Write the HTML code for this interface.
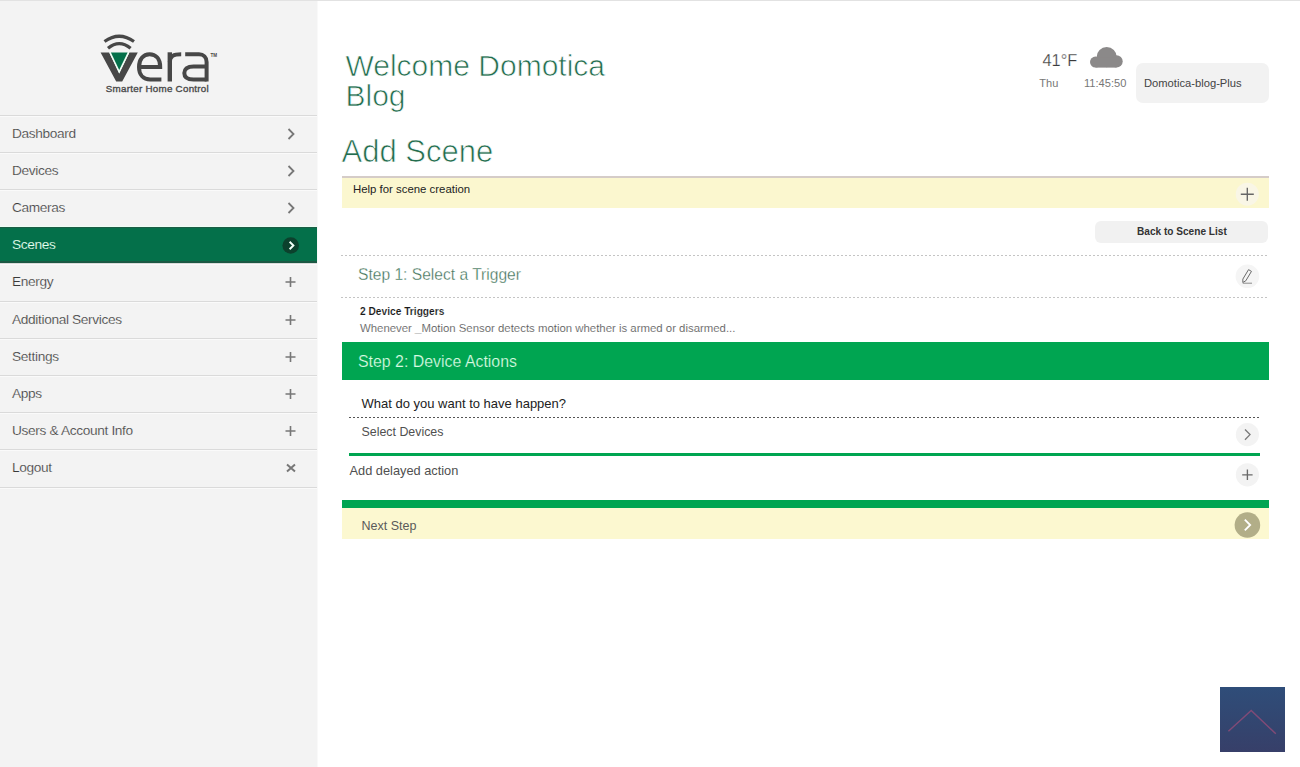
<!DOCTYPE html>
<html><head><meta charset="utf-8">
<style>
*{margin:0;padding:0;box-sizing:border-box}
html,body{width:1300px;height:767px;overflow:hidden;background:#fff;font-family:"Liberation Sans",sans-serif}
.abs{position:absolute}
.t{position:absolute;white-space:nowrap;line-height:1}
#topline{position:absolute;left:0;top:0;width:1300px;height:1px;background:#e2e2e2}
#side{position:absolute;left:0;top:1px;width:317px;height:766px;background:#f3f3f3;box-shadow:1px 0 0 #f9f9f9}
.mi{position:absolute;left:0;width:317px;height:37.2px;border-top:1px solid #dadada}
.mi:after{content:"";position:absolute;left:0;top:0;width:317px;height:1px;background:#fafafa}
.mi span{position:absolute;left:12px;top:11.2px;font-size:13.7px;line-height:14px;letter-spacing:-0.35px;color:#3a3a3a;white-space:nowrap;-webkit-text-stroke:0.2px #f3f3f3}
.mi svg{position:absolute;left:280px;top:8px}
.mi.act{background:#04704a;border-top:1px solid #ecfff5;box-shadow:inset 0 1px 0 #1d5c45,inset 0 -2px 0 #1b5843,0 1px 0 #ecfff5}
.mi.act:after{display:none}
.mi.act span{color:#e6fff0;-webkit-text-stroke:0.12px #04704a}
</style></head><body>
<div id="topline"></div>
<div id="side"></div>
<!-- logo -->
<svg class="abs" style="left:0;top:0" width="317" height="110" viewBox="0 0 317 110">
  <g fill="none" stroke="#474747" stroke-linecap="butt">
    <path d="M104.5,41.5 Q119.2,31 134,41.5" stroke-width="3.2"/>
    <path d="M108,48.3 Q119.2,39 130.6,48.3" stroke-width="3.2"/>
  </g>
  <polygon points="100.6,52.5 109.2,52.5 119.2,73.5 129.4,52.5 137.8,52.5 122.2,81.5 116.2,81.5" fill="#474747"/>
  <polygon points="109.2,52.5 129.4,52.5 119.2,73.5" fill="#f0fff6"/>
  <polygon points="110.9,52.5 127.6,52.5 119.2,70" fill="#04704a"/>
  <g fill="none" stroke="#474747" stroke-width="4">
    <path d="M139.5,67 L160.2,67 C160.2,58.5 155.5,54.3 149.6,54.3 C143.2,54.3 139,59.5 139,67 C139,75 143.5,79.5 150.2,79.5 L161.4,79.5"/>
    <path d="M169.8,52.3 V81.5" stroke-width="4.4"/>
    <path d="M169.8,62 C170,56 173.5,54.3 181.2,54.3"/>
    <path d="M185.2,54.3 H199 C203.5,54.3 206.6,57.5 206.6,62 V81.5"/>
    <path d="M206.6,66.4 H193.5 C187,66.4 184.3,69.5 184.3,73 C184.3,77 187,79.5 193.5,79.5 H206.6"/>
  </g>
  <text x="210.4" y="56.5" font-family="Liberation Sans" font-weight="bold" font-size="4.6" fill="#474747">TM</text>
</svg>
<div class="t" style="left:105.8px;top:83.6px;font-size:9.8px;letter-spacing:0.26px;color:#4a4a4a;-webkit-text-stroke:0.35px #4a4a4a">Smarter Home Control</div>

<div class="mi" style="top:114.5px"><span>Dashboard</span><svg width="20" height="20" viewBox="0 0 20 20"><path d="M8.5,5 L13.5,10 L8.5,15" fill="none" stroke="#777" stroke-width="1.8"/></svg></div>
<div class="mi" style="top:151.7px"><span>Devices</span><svg width="20" height="20" viewBox="0 0 20 20"><path d="M8.5,5 L13.5,10 L8.5,15" fill="none" stroke="#777" stroke-width="1.8"/></svg></div>
<div class="mi" style="top:188.9px"><span>Cameras</span><svg width="20" height="20" viewBox="0 0 20 20"><path d="M8.5,5 L13.5,10 L8.5,15" fill="none" stroke="#777" stroke-width="1.8"/></svg></div>
<div class="mi act" style="top:226.1px"><span>Scenes</span><svg width="20" height="20" viewBox="0 0 20 20"><circle cx="10.7" cy="10.5" r="8.3" fill="#0c412d"/><path d="M9.6,6.8 L13.4,10.5 L9.6,14.2" fill="none" stroke="#f4fff8" stroke-width="1.9"/></svg></div>
<div class="mi" style="top:263.3px"><span>Energy</span><svg width="20" height="20" viewBox="0 0 20 20"><path d="M5.5,10 H15.5 M10.5,5 V15" fill="none" stroke="#777" stroke-width="1.6"/></svg></div>
<div class="mi" style="top:300.5px"><span>Additional Services</span><svg width="20" height="20" viewBox="0 0 20 20"><path d="M5.5,10 H15.5 M10.5,5 V15" fill="none" stroke="#777" stroke-width="1.6"/></svg></div>
<div class="mi" style="top:337.7px"><span>Settings</span><svg width="20" height="20" viewBox="0 0 20 20"><path d="M5.5,10 H15.5 M10.5,5 V15" fill="none" stroke="#777" stroke-width="1.6"/></svg></div>
<div class="mi" style="top:374.9px"><span>Apps</span><svg width="20" height="20" viewBox="0 0 20 20"><path d="M5.5,10 H15.5 M10.5,5 V15" fill="none" stroke="#777" stroke-width="1.6"/></svg></div>
<div class="mi" style="top:412.1px"><span>Users &amp; Account Info</span><svg width="20" height="20" viewBox="0 0 20 20"><path d="M5.5,10 H15.5 M10.5,5 V15" fill="none" stroke="#777" stroke-width="1.6"/></svg></div>
<div class="mi" style="top:449.3px"><span>Logout</span><svg width="20" height="20" viewBox="0 0 20 20"><path d="M7,6.5 L15,13.5 M15,6.5 L7,13.5" fill="none" stroke="#777" stroke-width="2"/></svg></div>
<div class="mi" style="top:486.5px;height:2px"></div>

<!-- header -->
<div class="t" style="left:345.5px;top:51.3px;font-size:30px;line-height:29.6px;color:#236d4e;-webkit-text-stroke:0.7px #fff;paint-order:normal">Welcome Domotica<br>Blog</div>
<div class="t" style="left:341.5px;top:135.5px;font-size:31px;color:#236d4e;-webkit-text-stroke:0.7px #fff">Add Scene</div>

<!-- weather -->
<div class="t" style="left:1042.5px;top:51.5px;font-size:16.4px;color:#3a3a3a;-webkit-text-stroke:0.25px #fff">41°F</div>
<svg class="abs" style="left:1088px;top:45px" width="38" height="25" viewBox="0 0 38 25">
  <g fill="#8b8989"><circle cx="7.5" cy="17.1" r="5.5"/><circle cx="18.7" cy="12.2" r="10.1"/><circle cx="28.5" cy="16.4" r="6.2"/><rect x="7.5" y="12.7" width="21" height="9.9"/></g>
</svg>
<div class="t" style="left:1039.3px;top:77.7px;font-size:11px;color:#777">Thu</div>
<div class="t" style="left:1084px;top:77.7px;font-size:11.1px;color:#777">11:45:50</div>
<div class="abs" style="left:1136px;top:63px;width:132.5px;height:39.5px;background:#f2f2f2;border-radius:7px"></div>
<div class="t" style="left:1144px;top:77.7px;font-size:11.2px;color:#444">Domotica-blog-Plus</div>

<!-- help -->
<div class="abs" style="left:342px;top:176px;width:926.5px;height:32px;background:#fbf7cf;border-top:2px solid #d5ccc8"></div>
<div class="t" style="left:353px;top:184.2px;font-size:11.4px;color:#222">Help for scene creation</div>
<svg class="abs" style="left:1234px;top:181px" width="27" height="27" viewBox="0 0 27 27">
  <circle cx="13.3" cy="13.2" r="11.5" fill="#f9f6e6"/>
  <path d="M6.8,13.2 H19.8 M13.3,6.7 V19.7" stroke="#666" stroke-width="1.35"/>
</svg>

<!-- back button -->
<div class="abs" style="left:1094.7px;top:221px;width:173.8px;height:22px;background:#f1f1f1;border-radius:6px"></div>
<div class="t" style="left:1137px;top:227.3px;font-size:10.1px;font-weight:bold;color:#333">Back to Scene List</div>

<!-- step1 -->
<div class="abs" style="left:341px;top:254.5px;width:927.5px;height:1px;background:repeating-linear-gradient(90deg,#c4c4c4 0 2px,transparent 2px 4px)"></div>
<div class="t" style="left:358px;top:266.8px;font-size:15.6px;color:#3c7055;-webkit-text-stroke:0.3px #fff">Step 1: Select a Trigger</div>
<svg class="abs" style="left:1234px;top:262px" width="27" height="27" viewBox="0 0 27 27">
  <circle cx="13.4" cy="14.3" r="11.8" fill="#f5f5f5"/>
  <path d="M8.8,20.5 L8.87,17.05 L14.54,7.63 L17.46,9.37 L11.79,18.79 Z" fill="none" stroke="#6a6a6a" stroke-width="1"/><path d="M8.8,21.2 H18" stroke="#8a8a8a" stroke-width="1"/>
</svg>
<div class="abs" style="left:341px;top:297.3px;width:927.5px;height:1px;background:repeating-linear-gradient(90deg,#c4c4c4 0 2px,transparent 2px 4px)"></div>
<div class="t" style="left:360px;top:307.2px;font-size:10.2px;font-weight:bold;color:#1a1a1a;-webkit-text-stroke:0.12px #fff">2 Device Triggers</div>
<div class="t" style="left:360px;top:322.7px;font-size:11.4px;color:#5a5a5a;-webkit-text-stroke:0.12px #fff">Whenever _Motion Sensor detects motion whether is armed or disarmed...</div>

<!-- step2 -->
<div class="abs" style="left:342px;top:342px;width:926.5px;height:38px;background:#00a551"></div>
<div class="t" style="left:358px;top:353.5px;font-size:15.9px;color:#d8fbe2;-webkit-text-stroke:0.2px #00a551">Step 2: Device Actions</div>
<div class="t" style="left:361.5px;top:396.7px;font-size:13px;color:#222">What do you want to have happen?</div>
<div class="abs" style="left:349px;top:416.5px;width:912px;height:1px;background:repeating-linear-gradient(90deg,#555 0 2px,transparent 2px 4px)"></div>
<div class="t" style="left:361.5px;top:426px;font-size:12.4px;color:#505050">Select Devices</div>
<svg class="abs" style="left:1234px;top:421px" width="27" height="27" viewBox="0 0 27 27">
  <circle cx="13.4" cy="13.6" r="11.6" fill="#f3f3f3"/>
  <path d="M11,8.5 L16,13.6 L11,18.7" fill="none" stroke="#7a7a7a" stroke-width="1.35"/>
</svg>
<div class="abs" style="left:349px;top:452.8px;width:911px;height:3.6px;background:#00a551"></div>
<div class="t" style="left:349.5px;top:465px;font-size:12.8px;color:#505050">Add delayed action</div>
<svg class="abs" style="left:1234px;top:461px" width="27" height="27" viewBox="0 0 27 27">
  <circle cx="13.4" cy="13.8" r="11.6" fill="#f3f3f3"/>
  <path d="M8.2,13.8 H18.6 M13.4,8.6 V19" stroke="#6a6a6a" stroke-width="1.35"/>
</svg>

<!-- next -->
<div class="abs" style="left:342px;top:500px;width:926.5px;height:8px;background:#00a551"></div>
<div class="abs" style="left:342px;top:508px;width:926.5px;height:31px;background:#fcf8d0"></div>
<div class="t" style="left:361.5px;top:519.8px;font-size:12.5px;color:#5a5a5a">Next Step</div>
<svg class="abs" style="left:1234px;top:511px" width="27" height="28" viewBox="0 0 27 28">
  <circle cx="13.4" cy="14" r="12.8" fill="#b2ae88"/>
  <path d="M10.8,8.6 L16.2,14 L10.8,19.4" fill="none" stroke="#fff" stroke-width="1.8"/>
</svg>

<!-- scroll top -->
<div class="abs" style="left:1220px;top:687px;width:64.5px;height:64.5px;background:linear-gradient(180deg,#2f4d79 0%,#33456f 60%,#373f69 100%)"></div>
<svg class="abs" style="left:1220px;top:687px" width="65" height="65" viewBox="0 0 65 65">
  <path d="M8.4,44.3 L31.2,23.5 L55.8,46.8" fill="none" stroke="#8e4b78" stroke-width="1.5" opacity="0.85"/>
</svg>
</body></html>
